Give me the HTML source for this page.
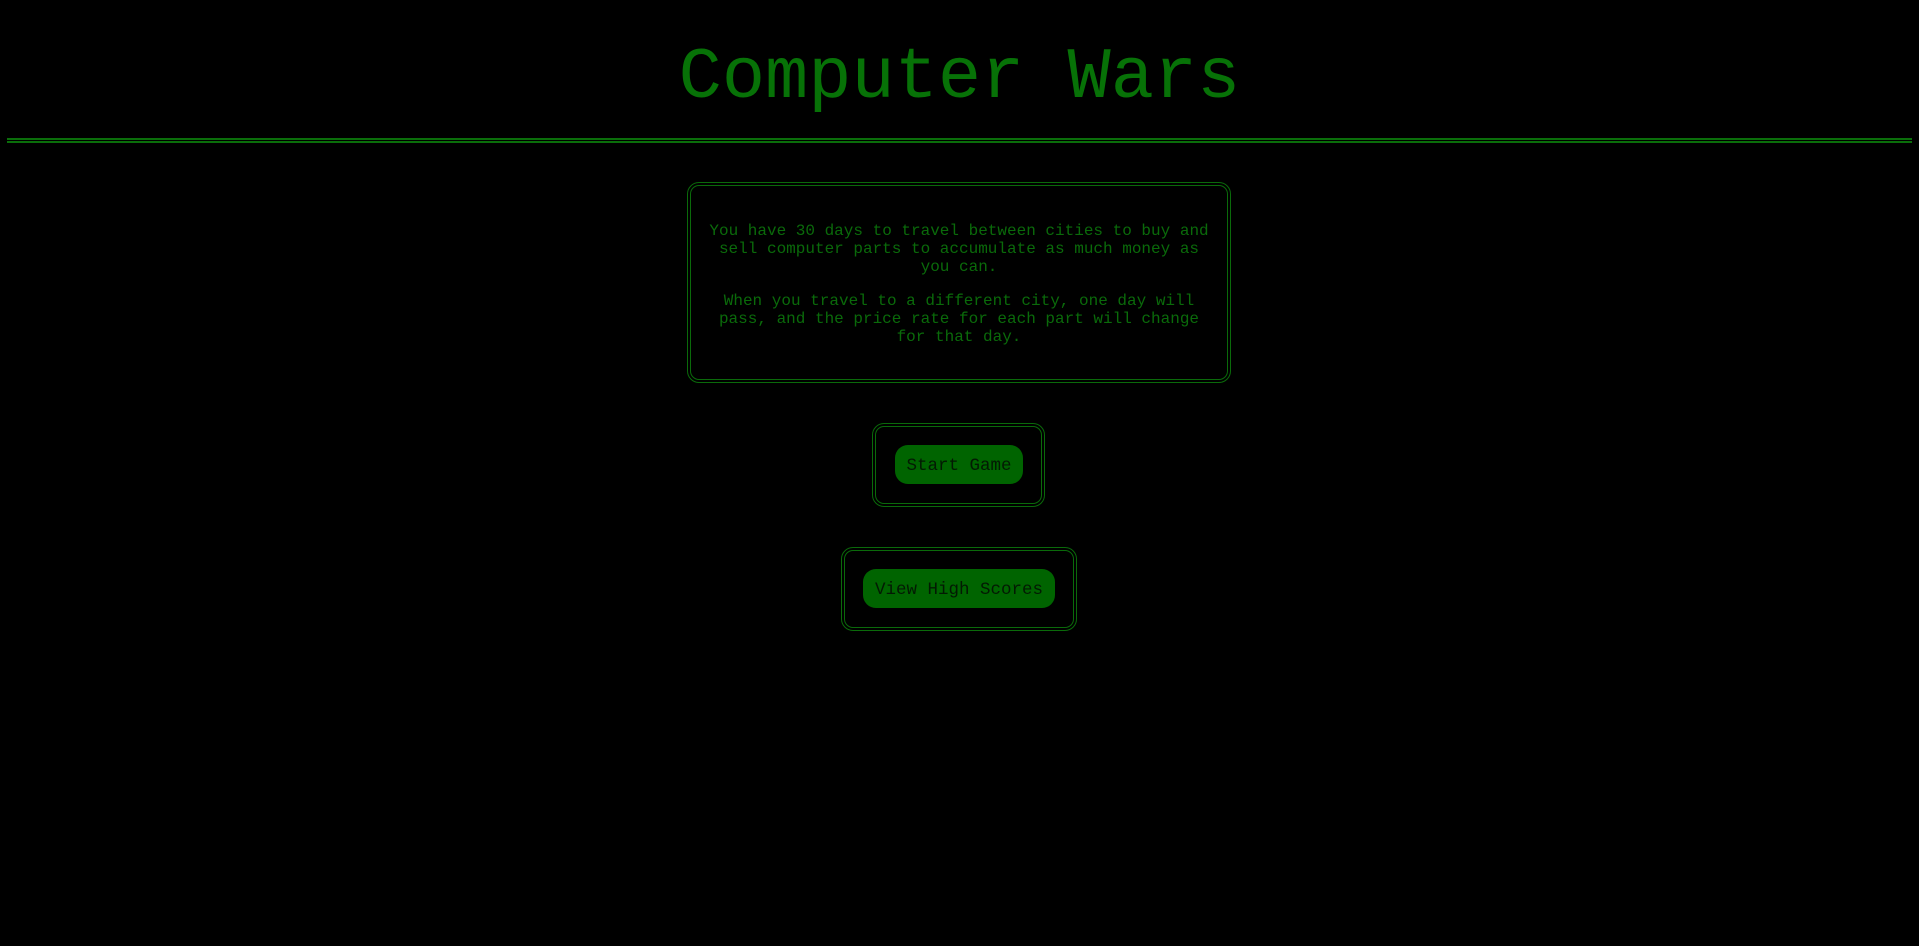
<!DOCTYPE html>
<html><head><style>
html,body{margin:0;background:#000;width:1919px;height:946px;overflow:hidden;font-family:"Liberation Mono",monospace;}
h1{position:absolute;left:0;width:1919px;top:38px;margin:0;text-align:center;font-weight:normal;font-size:72px;line-height:80px;color:#077207;}
.hr{position:absolute;left:7px;width:1905px;top:138px;height:1px;border-top:2px solid #0a6e0a;border-bottom:2px solid #0a6e0a;}
.box{position:absolute;border:4px double #0a6a0a;border-radius:12px;box-sizing:border-box;}
.info{left:687px;top:182px;width:544px;height:201px;color:#0a6a0a;font-size:16px;line-height:18px;text-align:center;padding:36px 12px 0;}
.info p{margin:0 0 16px;}
.btn{position:absolute;background:#006400;border-radius:13px;color:#031a03;font-size:17.5px;text-align:center;line-height:42px;height:39px;}
</style></head><body>
<h1>Computer Wars</h1>
<div class="hr"></div>
<div class="box info"><p>You have 30 days to travel between cities to buy and sell computer parts to accumulate as much money as you can.</p><p>When you travel to a different city, one day will pass, and the price rate for each part will change for that day.</p></div>
<div class="box" style="left:872px;top:423px;width:173px;height:84px"></div>
<div class="btn" style="left:895px;top:445px;width:128px">Start Game</div>
<div class="box" style="left:841px;top:547px;width:236px;height:84px"></div>
<div class="btn" style="left:863px;top:569px;width:192px">View High Scores</div>
</body></html>
